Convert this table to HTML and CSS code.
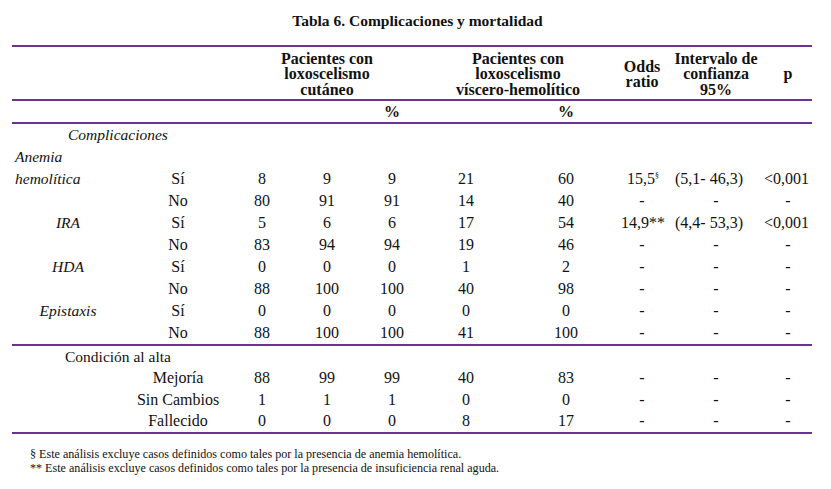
FILE: index.html
```html
<!DOCTYPE html>
<html lang="es">
<head>
<meta charset="utf-8">
<title>Tabla 6</title>
<link rel="stylesheet" href="styles.css">
</head>
<body>
<div class="page">
  <h1 class="title">Tabla 6. Complicaciones y mortalidad</h1>
  <table class="tbl">
    <colgroup>
      <col class="c-a"><col class="c-b"><col class="c-c"><col class="c-d"><col class="c-e">
      <col class="c-f"><col class="c-g"><col class="c-h"><col class="c-i"><col class="c-j">
    </colgroup>
    <thead>
      <tr class="h1">
        <th></th><th></th>
        <th colspan="3">Pacientes con<br>loxoscelismo<br>cutáneo</th>
        <th colspan="2" class="h-visc">Pacientes con<br>loxoscelismo<br>víscero-hemolítico</th>
        <th>Odds<br>ratio</th>
        <th>Intervalo de<br>confianza<br>95%</th>
        <th>p</th>
      </tr>
      <tr class="h2">
        <th></th><th></th><th></th><th></th><th>%</th><th></th><th>%</th><th></th><th></th><th></th>
      </tr>
    </thead>
    <tbody class="sec">
      <tr><td colspan="10" class="sec-title it">Complicaciones</td></tr>
      <tr><td class="lbl-l it">Anemia</td><td colspan="9"></td></tr>
      <tr><td class="lbl-l it">hemolítica</td><td>Sí</td><td>8</td><td>9</td><td>9</td><td class="f">21</td><td>60</td><td class="odds">15,5<sup class="sup">§</sup></td><td class="ci">(5,1- 46,3)</td><td class="pv">&lt;0,001</td></tr>
      <tr><td></td><td>No</td><td>80</td><td>91</td><td>91</td><td class="f">14</td><td>40</td><td>-</td><td>-</td><td>-</td></tr>
      <tr><td class="lbl-c it">IRA</td><td>Sí</td><td>5</td><td>6</td><td>6</td><td class="f">17</td><td>54</td><td class="odds">14,9**</td><td class="ci">(4,4- 53,3)</td><td class="pv">&lt;0,001</td></tr>
      <tr><td></td><td>No</td><td>83</td><td>94</td><td>94</td><td class="f">19</td><td>46</td><td>-</td><td>-</td><td>-</td></tr>
      <tr><td class="lbl-c it">HDA</td><td>Sí</td><td>0</td><td>0</td><td>0</td><td class="f">1</td><td>2</td><td>-</td><td>-</td><td>-</td></tr>
      <tr><td></td><td>No</td><td>88</td><td>100</td><td>100</td><td class="f">40</td><td>98</td><td>-</td><td>-</td><td>-</td></tr>
      <tr><td class="lbl-c it">Epistaxis</td><td>Sí</td><td>0</td><td>0</td><td>0</td><td class="f">0</td><td>0</td><td>-</td><td>-</td><td>-</td></tr>
      <tr><td></td><td>No</td><td>88</td><td>100</td><td>100</td><td class="f">41</td><td>100</td><td>-</td><td>-</td><td>-</td></tr>
    </tbody>
    <tbody class="sec sec2">
      <tr><td colspan="10" class="sec-title2">Condición al alta</td></tr>
      <tr><td></td><td>Mejoría</td><td>88</td><td>99</td><td>99</td><td class="f">40</td><td>83</td><td>-</td><td>-</td><td>-</td></tr>
      <tr><td></td><td>Sin Cambios</td><td>1</td><td>1</td><td>1</td><td class="f">0</td><td>0</td><td>-</td><td>-</td><td>-</td></tr>
      <tr><td></td><td>Fallecido</td><td>0</td><td>0</td><td>0</td><td class="f">8</td><td>17</td><td>-</td><td>-</td><td>-</td></tr>
    </tbody>
  </table>
  <div class="notes">
    <p>§ Este análisis excluye casos definidos como tales por la presencia de anemia hemolítica.</p>
    <p>** Este análisis excluye casos definidos como tales por la presencia de insuficiencia renal aguda.</p>
  </div>
</div>
</body>
</html>
```
FILE: styles.css
```css
html, body {
  margin: 0;
  padding: 0;
  background: #ffffff;
}
body {
  font-family: "Liberation Serif", "Times New Roman", serif;
  color: #111111;
}
.page {
  width: 831px;
  height: 489px;
  padding-top: 12px;
  box-sizing: border-box;
}
.title {
  margin: 0;
  font-size: 15.5px;
  font-weight: bold;
  text-align: center;
  line-height: 18px;
  padding-left: 4px;
}
.tbl {
  margin-top: 15px;
  margin-left: 12px;
  width: 800px;
  border-collapse: collapse;
  table-layout: fixed;
  font-size: 16px;
}
.c-a { width: 118px; }
.c-b { width: 96px; }
.c-c { width: 72px; }
.c-d { width: 58px; }
.c-e { width: 72px; }
.c-f { width: 88px; }
.c-g { width: 100px; }
.c-h { width: 52px; }
.c-i { width: 96px; }
.c-j { width: 48px; }
.tbl th, .tbl td {
  padding: 0;
  text-align: center;
  vertical-align: middle;
  white-space: nowrap;
}
.tbl thead th {
  font-size: 16px;
  font-weight: bold;
  line-height: 15.5px;
}
.h1 {
  border-top: 2px solid #6c3393;
}
.h1 th {
  height: 50px;
  padding-top: 2px;
}
.tbl thead .h-visc {
  padding-right: 8px;
}
.h2 {
  border-top: 2px solid #6c3393;
  border-bottom: 2px solid #6c3393;
}
.h2 th {
  height: 21px;
}
.sec td {
  height: 22px;
  line-height: 18px;
}
.sec2 {
  border-top: 2px solid #6c3393;
  border-bottom: 2px solid #6c3393;
}
.sec2 td {
  height: 21.5px;
}
.it {
  font-style: italic;
}
.tbl .sec-title {
  text-align: left;
  padding-left: 56px;
  font-size: 15.5px;
}
.tbl .sec-title2 {
  text-align: left;
  padding-left: 53px;
  font-size: 15.5px;
}
.tbl .lbl-l {
  text-align: left;
  padding-left: 3px;
  font-size: 15.5px;
}
.tbl .lbl-c {
  padding-right: 6px;
  font-size: 15.5px;
}
.tbl .f {
  padding-right: 12px;
}
.tbl .odds {
  padding-left: 2px;
}
.tbl .ci {
  padding-right: 14px;
}
.tbl .pv {
  padding-right: 14px;
}
.sup {
  font-size: 8px;
  vertical-align: 6px;
  line-height: 0;
}
.notes {
  margin-top: 13px;
  padding-left: 30px;
  font-size: 12.1px;
  line-height: 14px;
}
.notes p {
  margin: 0;
}
```
